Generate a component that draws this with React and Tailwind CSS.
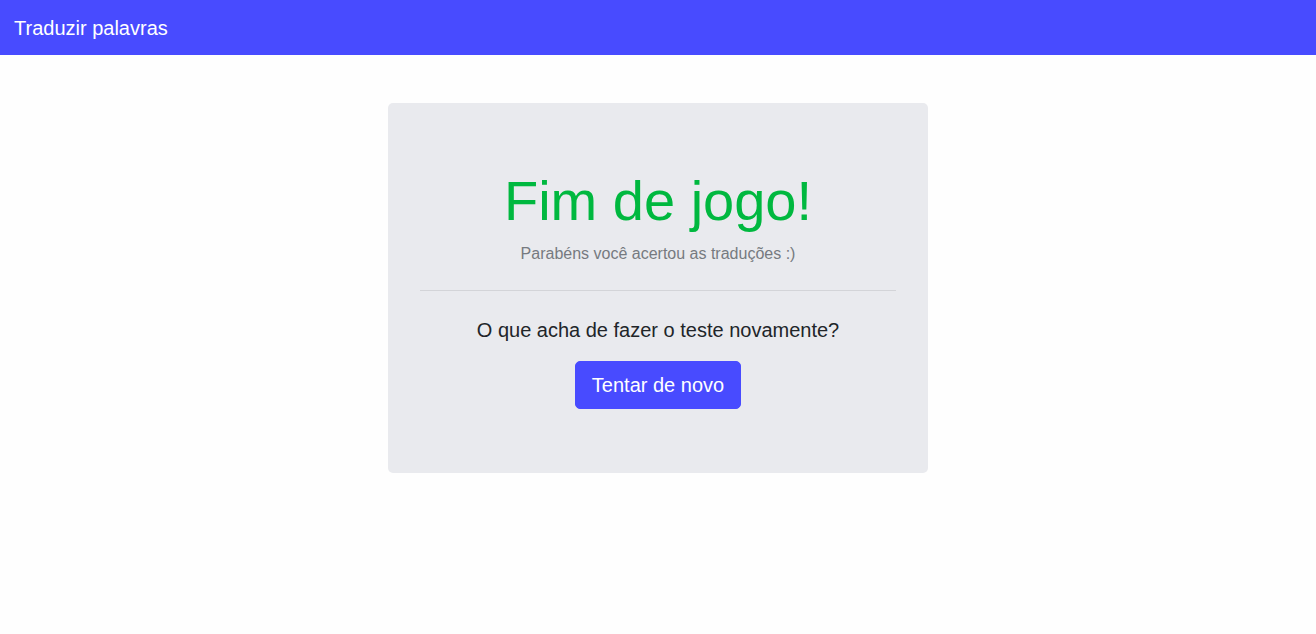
import React from "react";

export default function App() {
  return (
    <div className="min-h-screen bg-[#fefefe] font-['Liberation_Sans',Arial,sans-serif]">
      {/* Navbar */}
      <nav className="h-[55px] bg-[#484bff] flex items-center px-[14px]">
        <span className="text-white text-[20px]">Traduzir palavras</span>
      </nav>

      {/* Card */}
      <div className="flex justify-center mt-12">
        <div className="w-[540px] bg-[#e9eaee] rounded-[5px] px-8 py-16 text-center">
          <h1 className="text-[56px] leading-[1.2] text-[#00b83f] mb-2">
            Fim de jogo!
          </h1>
          <p className="text-[16px] leading-6 text-[#767a80]">
            Parabéns você acertou as traduções :)
          </p>
          <hr className="my-6 border-t border-[#d3d4d8]" />
          <p className="text-[20px] leading-[30px] text-[#212529] mb-4">
            O que acha de fazer o teste novamente?
          </p>
          <button className="bg-[#484bff] text-white text-[20px] leading-[30px] px-4 py-2 rounded-[5px] border border-[#484bff]">
            Tentar de novo
          </button>
        </div>
      </div>
    </div>
  );
}
